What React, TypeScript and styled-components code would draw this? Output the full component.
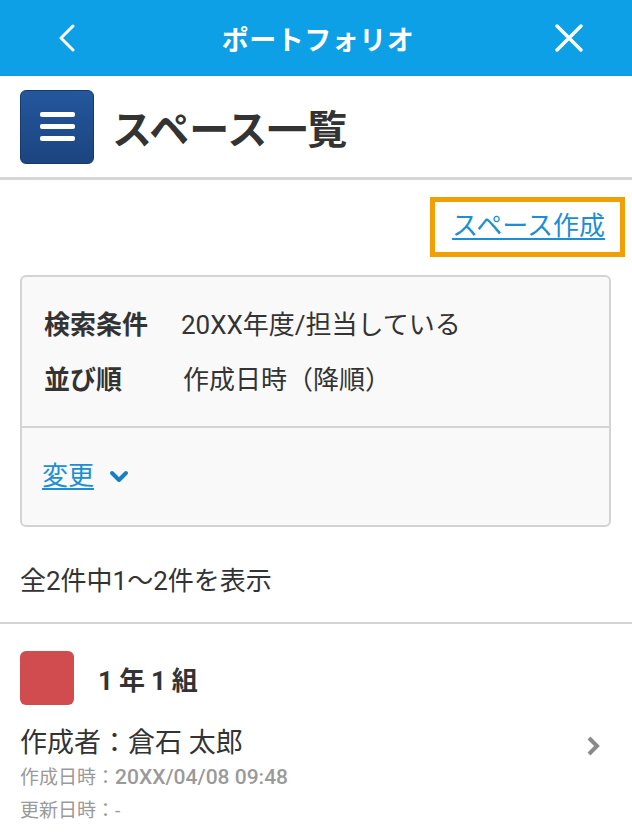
import React from 'react';
import styled, { createGlobalStyle } from 'styled-components';

const GlobalStyle = createGlobalStyle`
  body {
    margin: 0;
    background: #ffffff;
    font-family: Roboto, 'Noto Sans CJK JP', 'Noto Sans', sans-serif;
    color: #333333;
  }
`;

const Page = styled.div`
  width: 632px;
  min-height: 833px;
  overflow: hidden;
`;

const Header = styled.header`
  height: 76px;
  background: #0ea0e6;
  display: flex;
  align-items: center;
  justify-content: space-between;
  padding: 0 48px 0 52px;
`;

const HeaderTitle = styled.h1`
  margin: 0;
  font-size: 27px;
  font-weight: 700;
  color: #ffffff;
  letter-spacing: 0.5px;
`;

const IconButton = styled.button`
  width: 30px;
  height: 30px;
  padding: 0;
  border: none;
  background: none;
  display: flex;
  align-items: center;
  justify-content: center;
`;

const TitleBar = styled.div`
  height: 101px;
  display: flex;
  align-items: center;
  gap: 18px;
  padding-left: 20px;
  border-bottom: 3px solid #d6d6d6;
`;

const MenuBox = styled.div`
  width: 72px;
  height: 72px;
  border-radius: 6px;
  border: 1px solid #163a6c;
  background: linear-gradient(#24579d, #1c4580);
  display: flex;
  flex-direction: column;
  align-items: center;
  justify-content: center;
  gap: 7px;
`;

const MenuBar = styled.span`
  display: block;
  width: 35px;
  height: 5px;
  border-radius: 2px;
  background: #ffffff;
`;

const PageTitle = styled.h2`
  margin: 0;
  font-size: 40px;
  font-weight: 700;
  color: #333333;
`;

const Content = styled.section`
  padding: 0 21px 0 20px;
`;

const ActionRow = styled.div`
  display: flex;
  justify-content: flex-end;
  margin: 17px -14px 0 0;
`;

const FocusBox = styled.div`
  box-sizing: border-box;
  width: 195px;
  height: 60px;
  border: 5px solid #f29f05;
  display: flex;
  align-items: center;
  justify-content: center;
  padding-left: 2px;
`;

const TextLink = styled.a<{ size: number }>`
  font-size: ${(p) => p.size}px;
  line-height: 1.2;
  color: #1b8fd4;
  text-decoration: underline;
  text-underline-offset: 3px;
  text-decoration-thickness: 2px;
  cursor: pointer;
`;

const FilterCard = styled.div`
  margin-top: 18px;
  border: 2px solid #d3d3d3;
  border-radius: 6px;
  background: #f9f9f9;
`;

const FilterList = styled.dl`
  margin: 0;
  padding: 28px 22px 26px;
  display: grid;
  grid-template-columns: 137px 1fr;
  row-gap: 15px;
  border-bottom: 2px solid #d3d3d3;
`;

const FilterLabel = styled.dt`
  font-size: 26px;
  font-weight: 700;
  line-height: 40px;
  color: #333333;
`;

const FilterValue = styled.dd<{ shift?: number }>`
  margin: 0 0 0 ${(p) => p.shift ?? 0}px;
  font-size: 26px;
  line-height: 40px;
  color: #333333;
`;

const ChangeRow = styled.div`
  height: 97px;
  display: flex;
  align-items: center;
  gap: 15px;
  padding-left: 20px;
`;

const CountText = styled.p`
  margin: 36px 0 23px;
  font-size: 26px;
  line-height: 36px;
  color: #333333;
`;

const Divider = styled.hr`
  margin: 0;
  border: none;
  border-top: 2px solid #d3d3d3;
`;

const SpaceItem = styled.article`
  padding: 27px 21px 0 20px;
`;

const SpaceHead = styled.div`
  display: flex;
  align-items: center;
  gap: 24px;
`;

const ColorChip = styled.div<{ color: string }>`
  width: 54px;
  height: 54px;
  border-radius: 6px;
  background: ${(p) => p.color};
`;

const SpaceName = styled.h3`
  margin: 0;
  font-size: 26px;
  font-weight: 700;
  letter-spacing: 6px;
  color: #333333;
`;

const OwnerRow = styled.div`
  margin-top: 20px;
  display: flex;
  align-items: center;
  justify-content: space-between;
`;

const OwnerText = styled.p`
  margin: 0;
  font-size: 27px;
  line-height: 36px;
  color: #333333;
`;

const MetaText = styled.p`
  margin: 0;
  font-size: 19px;
  line-height: 33px;
  color: #9a9a9a;
`;

const MetaNumber = styled.span`
  font-weight: 500;
  font-size: 21px;
`;

const App = () => {
  return (
    <Page>
      <GlobalStyle />
      <Header>
        <IconButton aria-label="戻る">
          <svg width="20" height="28" viewBox="0 0 20 28">
            <polyline points="16,2 4,14 16,26" fill="none" stroke="#fff" strokeWidth="3" strokeLinecap="round" strokeLinejoin="round" />
          </svg>
        </IconButton>
        <HeaderTitle>ポートフォリオ</HeaderTitle>
        <IconButton aria-label="閉じる">
          <svg width="28" height="28" viewBox="0 0 28 28">
            <path d="M2 2 L26 26 M26 2 L2 26" stroke="#fff" strokeWidth="3.4" strokeLinecap="round" />
          </svg>
        </IconButton>
      </Header>

      <TitleBar>
        <MenuBox>
          <MenuBar />
          <MenuBar />
          <MenuBar />
        </MenuBox>
        <PageTitle>スペース一覧</PageTitle>
      </TitleBar>

      <Content>
        <ActionRow>
          <FocusBox>
            <TextLink size={26}>スペース作成</TextLink>
          </FocusBox>
        </ActionRow>

        <FilterCard>
          <FilterList>
            <FilterLabel>検索条件</FilterLabel>
            <FilterValue>20XX年度/担当している</FilterValue>
            <FilterLabel>並び順</FilterLabel>
            <FilterValue shift={2}>作成日時（降順）</FilterValue>
          </FilterList>
          <ChangeRow>
            <TextLink size={26}>変更</TextLink>
            <svg width="20" height="14" viewBox="0 0 20 14">
              <polyline points="3,3 10,10 17,3" fill="none" stroke="#1a7fc1" strokeWidth="4" strokeLinecap="round" strokeLinejoin="round" />
            </svg>
          </ChangeRow>
        </FilterCard>

        <CountText>全2件中1〜2件を表示</CountText>
      </Content>

      <Divider />

      <SpaceItem>
        <SpaceHead>
          <ColorChip color="#d14c4e" />
          <SpaceName>1年1組</SpaceName>
        </SpaceHead>
        <OwnerRow>
          <OwnerText>作成者：倉石 太郎</OwnerText>
          <svg width="18" height="22" viewBox="0 0 18 22" style={{ marginTop: 6, marginRight: 8 }}>
            <polyline points="4,3 12,11 4,19" fill="none" stroke="#8a8a8a" strokeWidth="4" strokeLinejoin="miter" />
          </svg>
        </OwnerRow>
        <MetaText>
          作成日時：<MetaNumber>20XX/04/08 09:48</MetaNumber>
        </MetaText>
        <MetaText>更新日時：-</MetaText>
      </SpaceItem>
    </Page>
  );
};

export default App;
